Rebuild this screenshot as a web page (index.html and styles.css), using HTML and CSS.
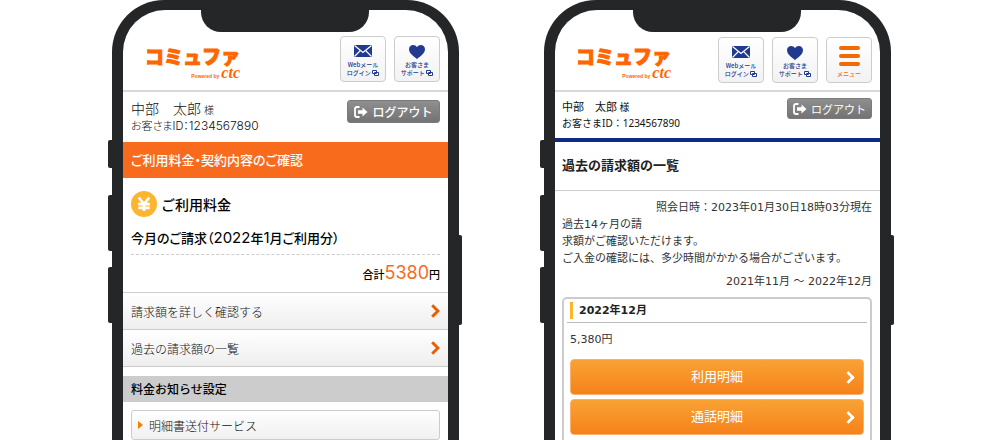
FILE: index.html
```
<!DOCTYPE html>
<html lang="ja">
<head>
<meta charset="utf-8">
<meta name="viewport" content="width=device-width, initial-scale=1">
<title>コミュファ ご利用料金・過去の請求額</title>
<link rel="stylesheet" href="styles.css">
</head>
<body>
<svg class="sprite" aria-hidden="true">
  <symbol id="mail" viewBox="0 0 18 12">
    <path fill="#213a8f" d="M0 0h18v12H0z"/>
    <path fill="none" stroke="#fff" stroke-width="1.3" d="M.5.5 9 7.5 17.5.5M.5 11.5 6.3 5.6M17.5 11.5l-5.8-5.9"/>
  </symbol>
  <symbol id="heart" viewBox="0 0 16 14">
    <path fill="#213a8f" d="M8 14C5 11.500 0 8.600 0 4.300 0 1.800 1.800 0 4.200 0 5.800 0 7.200.800 8 2.200 8.800.800 10.200 0 11.800 0 14.200 0 16 1.800 16 4.300 16 8.600 11 11.500 8 14z"/>
  </symbol>
  <symbol id="window" viewBox="0 0 7 6">
    <path fill="#fff" stroke="#213a8f" d="M.5.5h4v3h-4zM2.500 2.500h4v3h-4z"/>
  </symbol>
  <symbol id="exit" viewBox="0 0 14 12">
    <path fill="none" stroke="#fff" stroke-width="1.800" d="M5.500 1H3Q1 1 1 3v6q0 2 2 2h2.500"/>
    <path fill="#fff" d="M4 4.200h4.500V1.500L13.500 6l-5 4.500V7.800H4z"/>
  </symbol>
  <symbol id="chevron" viewBox="0 0 9 14">
    <path fill="none" stroke="currentColor" stroke-width="3" d="M1.200 1.200 7 7l-5.800 5.800"/>
  </symbol>
  <symbol id="yen" viewBox="0 0 26 26">
    <circle cx="13" cy="13" r="13" fill="#fdb52f"/>
    <path fill="none" stroke="#fff" stroke-width="2.800" d="M7.800 6.500 13 13l5.200-6.500M13 12.500V20M7.200 13.200h11.600M7.200 16.800h11.600"/>
  </symbol>
</svg>

<main class="stage">
  <section class="phone">
    <span class="key key-mute"></span><span class="key key-up"></span><span class="key key-down"></span><span class="key key-power"></span>
    <div class="notch"></div>
    <div class="screen">
      <header class="header">
        <div class="logo"><span class="logo-name">コミュファ</span><span class="logo-sub"><small>Powered by</small><em>ctc</em></span></div>
        <nav class="tools">
          <a class="tool" href="#"><svg class="ico-mail"><use href="#mail"/></svg><span>Webメール<br>ログイン <svg class="ico-window"><use href="#window"/></svg></span></a>
          <a class="tool" href="#"><svg class="ico-heart"><use href="#heart"/></svg><span>お客さま<br>サポート <svg class="ico-window"><use href="#window"/></svg></span></a>
        </nav>
      </header>
      <div class="user">
        <div>
          <p class="user-name">中部　太郎 <small>様</small></p>
          <p class="user-id">お客さまID：<span class="user-no">1234567890</span></p>
        </div>
        <button class="logout" type="button"><svg class="ico-exit"><use href="#exit"/></svg>ログアウト</button>
      </div>
      <h1 class="banner">ご利用料金・契約内容のご確認</h1>
      <section class="charge">
        <h2 class="charge-title"><svg class="ico-yen"><use href="#yen"/></svg>ご利用料金</h2>
        <p class="charge-month">今月のご請求（<span class="num">2022</span>年<span class="num">1</span>月ご利用分）</p>
        <p class="charge-total">合計<strong>5380</strong>円</p>
      </section>
      <nav class="links">
        <a class="link" href="#">請求額を詳しく確認する<svg class="ico-chevron"><use href="#chevron"/></svg></a>
        <a class="link" href="#">過去の請求額の一覧<svg class="ico-chevron"><use href="#chevron"/></svg></a>
      </nav>
      <h2 class="section-bar">料金お知らせ設定</h2>
      <a class="service" href="#">明細書送付サービス</a>
    </div>
  </section>

  <section class="phone phone-history">
    <span class="key key-mute"></span><span class="key key-up"></span><span class="key key-down"></span><span class="key key-power"></span>
    <div class="notch"></div>
    <div class="screen">
      <header class="header">
        <div class="logo"><span class="logo-name">コミュファ</span><span class="logo-sub"><small>Powered by</small><em>ctc</em></span></div>
        <nav class="tools">
          <a class="tool" href="#"><svg class="ico-mail"><use href="#mail"/></svg><span>Webメール<br>ログイン <svg class="ico-window"><use href="#window"/></svg></span></a>
          <a class="tool" href="#"><svg class="ico-heart"><use href="#heart"/></svg><span>お客さま<br>サポート <svg class="ico-window"><use href="#window"/></svg></span></a>
          <button class="tool tool-menu" type="button"><span class="bars"><i></i><i></i><i></i></span>メニュー</button>
        </nav>
      </header>
      <div class="user">
        <div>
          <p class="user-name">中部　太郎 <small>様</small></p>
          <p class="user-id">お客さまID：1234567890</p>
        </div>
        <button class="logout" type="button"><svg class="ico-exit"><use href="#exit"/></svg>ログアウト</button>
      </div>
      <h1 class="page-title">過去の請求額の一覧</h1>
      <div class="history">
        <p class="right">照会日時：2023年01月30日18時03分現在</p>
        <p class="note">過去14ヶ月の請<br>求額がご確認いただけます。<br>ご入金の確認には、多少時間がかかる場合がございます。</p>
        <p class="right range">2021年11月 ～ 2022年12月</p>
        <article class="bill">
          <h2 class="bill-month">2022年12月</h2>
          <p class="bill-price">5,380円</p>
          <a class="detail" href="#">利用明細<svg class="ico-chevron"><use href="#chevron"/></svg></a>
          <a class="detail" href="#">通話明細<svg class="ico-chevron"><use href="#chevron"/></svg></a>
        </article>
      </div>
    </div>
  </section>
</main>
</body>
</html>
```

FILE: styles.css
```
* { box-sizing: border-box; }

body, h1, h2, p { margin: 0; }

body {
  background: #fff;
  color: #111;
  font-family: "Noto Sans CJK JP", sans-serif;
  font-size: 12px;
}

a { color: inherit; text-decoration: none; }
button { margin: 0; padding: 0; font-family: inherit; cursor: pointer; }
svg { display: block; flex: none; }
.sprite { position: absolute; width: 0; height: 0; }

.stage {
  display: flex;
  justify-content: center;
  align-items: flex-start;
  gap: 85px;
  height: 100vh;
  padding: 0 16px 0 14px;
  overflow: hidden;
}

/* Phone body */
.phone {
  position: relative;
  flex: 0 1 347px;
  min-width: 0;
  padding: 10px 11px 60px;
  background: #242628;
  border-radius: 52px;
}
.screen {
  padding-bottom: 40px;
  background: #fff;
  border-radius: 42px;
  overflow: hidden;
}
.notch {
  position: absolute;
  top: 8px;
  left: 50%;
  width: 168px;
  height: 24px;
  margin-left: -85px;
  background: #242628;
  border-radius: 0 0 20px 20px;
}
.key {
  position: absolute;
  left: -4px;
  width: 5px;
  height: 56px;
  background: #242628;
  border-radius: 2px 0 0 2px;
}
.key-mute { top: 140px; height: 28px; }
.key-up { top: 195px; }
.key-down { top: 267px; }
.key-power {
  top: 235px;
  left: auto;
  right: -3px;
  height: 90px;
  border-radius: 0 2px 2px 0;
}

/* Header */
.header {
  display: flex;
  justify-content: space-between;
  align-items: flex-start;
  padding: 26px 8px 8px 22px;
  border-bottom: 2px solid #d9d9d9;
}
.logo {
  display: flex;
  flex-direction: column;
  padding-top: 10px;
  color: #ff6600;
}
.logo-name {
  font-size: 19px;
  font-weight: 900;
  line-height: 20px;
  -webkit-text-stroke: 1px #ff6600;
}
.logo-sub {
  display: flex;
  justify-content: flex-end;
  align-items: baseline;
  gap: 2px;
  height: 14px;
}
.logo-sub small { font: bold 5px/14px "Liberation Sans", sans-serif; }
.logo-sub em { font: italic bold 16px/14px "Liberation Serif", serif; }

.tools { display: flex; gap: 8px; }
.tool {
  display: flex;
  flex-direction: column;
  align-items: center;
  gap: 2px;
  width: 46px;
  height: 46px;
  padding-top: 8px;
  background: linear-gradient(#fff, #f2f2f2);
  border: 1px solid #ccc;
  border-radius: 4px;
  color: #213a8f;
  font-size: 6px;
  font-weight: 500;
  line-height: 8px;
}
.tool span { text-align: center; }
.ico-mail { width: 18px; height: 12px; margin-bottom: 2px; }
.ico-heart { width: 16px; height: 14px; }
.ico-window { display: inline-block; width: 7px; height: 6px; vertical-align: -1px; }
.tool-menu { gap: 4px; color: #f26a00; }
.bars { display: flex; flex-direction: column; gap: 4px; width: 21px; }
.bars i { height: 4px; background: #f26a00; border-radius: 2px; }

/* User row */
.user {
  display: flex;
  justify-content: space-between;
  align-items: flex-start;
  padding: 8px 8px 7px;
}
.user-name { font-size: 14px; font-weight: 300; line-height: 16px; }
.user-name small { font-size: 10px; }
.user-id {
  font-family: Inter, "Noto Sans CJK JP", sans-serif;
  font-size: 11px;
  font-weight: 300;
  line-height: 17px;
  font-feature-settings: "palt";
}
.user-no { font-size: 12px; line-height: 1; }
.logout {
  display: flex;
  align-items: center;
  justify-content: center;
  gap: 4px;
  width: 93px;
  height: 23px;
  background: linear-gradient(#8f8f8f, #737373);
  border: 1px solid #7b7b7b;
  border-radius: 3px;
  color: #fff;
  font-size: 12px;
  font-weight: 500;
}
.ico-exit { width: 14px; height: 12px; }

/* Charges */
.banner {
  padding: 0 8px;
  background: #f86b1d;
  color: #fff;
  font-size: 13px;
  font-weight: 500;
  line-height: 36px;
  font-feature-settings: "palt";
}
.charge { padding: 13px 8px 7px; color: #000; }
.charge-title {
  display: flex;
  align-items: center;
  gap: 4px;
  font-size: 14px;
  font-weight: 500;
  line-height: 24px;
}
.ico-yen { width: 26px; height: 26px; }
.charge-month {
  padding: 12px 0 7px;
  border-bottom: 1px dashed #ccc;
  font-size: 13px;
  font-weight: 500;
  line-height: 18px;
  font-feature-settings: "palt";
}
.num { font-family: Inter, sans-serif; font-size: 15px; font-weight: 400; line-height: 1; }
.charge-total {
  padding-top: 7px;
  font-size: 11px;
  font-weight: 500;
  line-height: 22px;
  text-align: right;
}
.charge-total strong {
  color: #f86b1d;
  font-family: Inter, sans-serif;
  font-size: 18px;
  font-weight: 400;
}
.link {
  display: flex;
  justify-content: space-between;
  align-items: center;
  height: 37px;
  padding: 0 8px;
  background: linear-gradient(#fff, #eee);
  border-top: 1px solid #ccc;
  font-weight: 300;
}
.link:last-child { height: 38px; border-bottom: 1px solid #ccc; }
.ico-chevron { width: 9px; height: 14px; }
.link .ico-chevron { color: #ea5d00; }
.section-bar {
  margin-top: 9px;
  padding: 0 8px;
  background: #ccc;
  color: #000;
  font-size: 12px;
  font-weight: 500;
  line-height: 26px;
}
.service {
  display: flex;
  align-items: center;
  gap: 6px;
  height: 30px;
  margin: 8px;
  padding: 0 6px;
  background: linear-gradient(#fff, #f0f0f0);
  border: 1px solid #ccc;
  border-radius: 3px;
  font-weight: 300;
}
.service::before {
  content: "";
  border: 4px solid transparent;
  border-left: 5px solid #f77f00;
  border-right: 0;
}

/* Billing history */
.phone-history .header { padding: 27px 8px 7px 21px; }
.phone-history .logo { padding-top: 9px; }
.phone-history .user { padding: 6px 8px 6px 7px; border-bottom: 4px solid #0c2a86; }
.phone-history .user-name { font-size: 11px; font-weight: 400; }
.phone-history .user-id {
  font-family: "Noto Sans", "Noto Sans CJK JP", sans-serif;
  font-size: 10px;
  font-weight: 400;
  font-feature-settings: normal;
}
.phone-history .logout { width: 85px; height: 21px; font-size: 11px; font-weight: 400; }
.page-title {
  padding: 0 7px 2px;
  border-bottom: 1px solid #ccc;
  color: #222;
  font-size: 13px;
  font-weight: 700;
  line-height: 46px;
}
.history {
  padding: 9px 8px 0 7px;
  color: #333;
  font-family: "DejaVu Sans", "Noto Sans CJK JP", sans-serif;
  font-size: 11px;
  line-height: 16px;
}
.note { line-height: 17px; }
.right { text-align: right; }
.range { padding: 7px 0; }
.bill {
  padding: 2px 3px 6px;
  border: 2px solid #ccc;
  border-radius: 5px;
}
.bill-month {
  display: flex;
  align-items: center;
  gap: 6px;
  padding: 1px 3px 3px;
  border-bottom: 1px solid #bbb;
  color: #222;
  font-size: 11px;
  font-weight: 700;
  line-height: 16px;
}
.bill-month::before { content: ""; width: 3px; height: 17px; background: #fdb52f; }
.bill-price { padding: 9px 3px 11px; }
.detail {
  display: grid;
  grid-template-columns: 1fr auto 1fr;
  align-items: center;
  height: 36px;
  margin: 0 3px 4px;
  padding: 0 8px;
  background: linear-gradient(#f9a234, #f5821a);
  border: 1px solid #fab06a;
  border-radius: 4px;
  color: #fff;
  font-size: 13px;
}
.detail::before { content: ""; }
.detail .ico-chevron { justify-self: end; height: 13px; }
```
